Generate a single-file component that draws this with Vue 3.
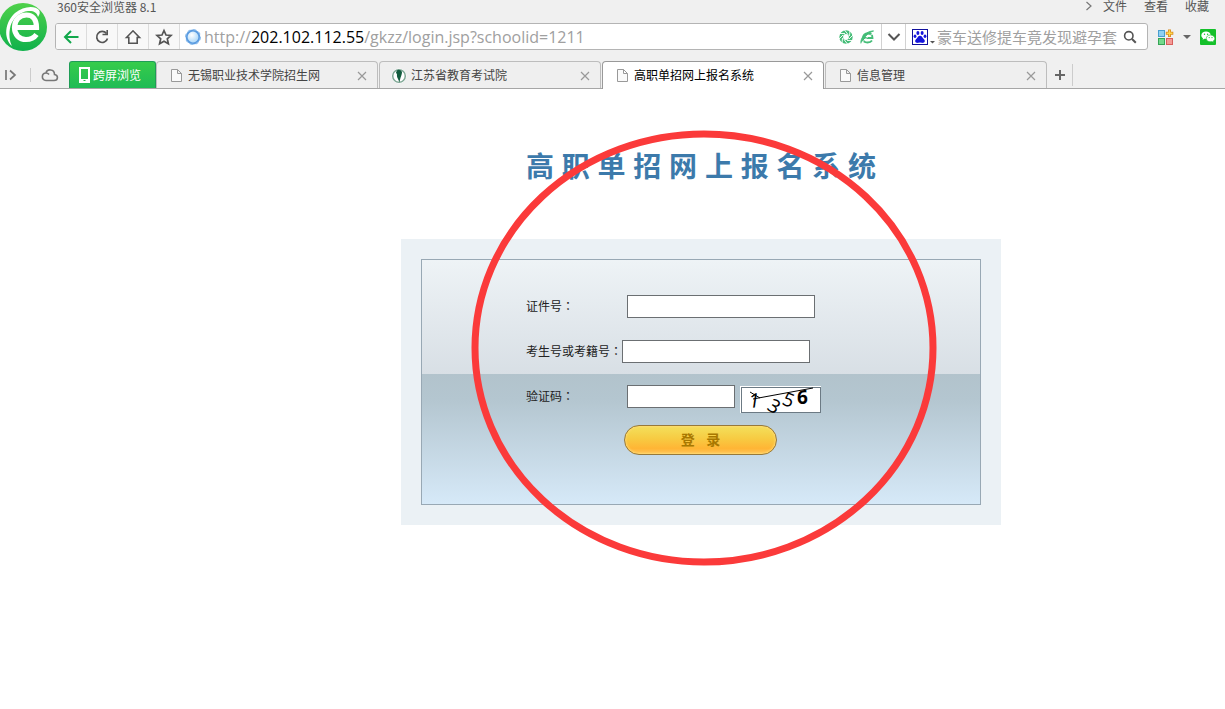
<script setup>
import { ref } from 'vue'

const menus = ['文件', '查看', '收藏']
const tabs = [
  { title: '无锡职业技术学院招生网', icon: 'page' },
  { title: '江苏省教育考试院', icon: 'leaf' },
  { title: '高职单招网上报名系统', icon: 'page' },
  { title: '信息管理', icon: 'page' },
]
const active = ref(2)

const url = ref('http://202.102.112.55/gkzz/login.jsp?schoolid=1211')
const editing = ref(false)
const keyword = ref('')

const idNumber = ref('')
const examNumber = ref('')
const captcha = ref('')
</script>

<template>
  <div class="window">
    <header class="chrome">
      <div class="top">
        <svg class="logo" viewBox="0 0 47 48" aria-hidden="true">
          <defs>
            <linearGradient id="lg" x1="0" y1="0" x2="0" y2="1">
              <stop offset="0" stop-color="#4fd14a" />
              <stop offset="1" stop-color="#10b14c" />
            </linearGradient>
          </defs>
          <circle cx="23" cy="24" r="24" fill="url(#lg)" />
          <path d="M15 24.500 H36.500 C36.500 16.500 32.500 12 26.500 12 C19.500 12 14.500 17 14.500 24.500 C14.500 32 19.500 36.500 26 36.500 C30.500 36.500 34 35 36.500 31.500" fill="none" stroke="#fff" stroke-width="5.200" />
          <path d="M12 43 C3 35 5 19 15 10 C23 3 35 2 39 7 C40.500 9 39.500 12 38 14 C37 9 33 7.500 28 8 C20 9 13 15 10.500 23 C8.500 31 9.500 38 12 43 Z" fill="#fff" />
        </svg>
        <div class="bars">
          <div class="titlebar">
            <span>360安全浏览器 8.1</span>
            <nav class="menus">
              <svg width="8" height="10" viewBox="0 0 8 10"><path d="M1.500 1 L6 5 L1.500 9" fill="none" stroke="#777" stroke-width="1.200" /></svg>
              <button v-for="m in menus" :key="m" type="button">{{ m }}</button>
            </nav>
          </div>
          <div class="toolrow">
            <div class="address">
              <button class="tool" type="button" aria-label="后退">
                <svg width="18" height="18" viewBox="0 0 18 18"><path d="M16.500 9 H3 M9 3 L3 9 L9 15" fill="none" stroke="#12a84c" stroke-width="2" /></svg>
              </button>
              <button class="tool" type="button" aria-label="刷新">
                <svg width="18" height="18" viewBox="0 0 18 18"><path d="M13.500 5.500 A5.500 5.500 0 1 0 14.500 10.500" fill="none" stroke="#555" stroke-width="1.700" /><path d="M14.200 2 V6.500 H9.500" fill="none" stroke="#555" stroke-width="1.600" /></svg>
              </button>
              <button class="tool" type="button" aria-label="主页">
                <svg width="18" height="18" viewBox="0 0 18 18"><path d="M2.500 9.500 L9 2.800 L15.500 9.500 H13.200 V15.200 H4.800 V9.500 Z" fill="none" stroke="#555" stroke-width="1.600" /></svg>
              </button>
              <button class="tool" type="button" aria-label="收藏本页">
                <svg width="18" height="18" viewBox="0 0 18 18"><path d="M9 2.500 L11 7 L16 7.500 L12.300 10.800 L13.400 15.700 L9 13.200 L4.600 15.700 L5.700 10.800 L2 7.500 L7 7 Z" fill="none" stroke="#555" stroke-width="1.700" /></svg>
              </button>
              <div class="url">
                <svg width="16" height="16" viewBox="0 0 16 16" aria-hidden="true">
                  <defs><radialGradient id="globe" cx=".4" cy=".35"><stop offset="0" stop-color="#fff" /><stop offset="1" stop-color="#b9defa" /></radialGradient></defs>
                  <circle cx="8" cy="8" r="6.400" fill="url(#globe)" stroke="#5a9be0" stroke-width="2" />
                  <circle cx="8" cy="8" r="7.400" fill="none" stroke="#8dbdec" stroke-width="1.200" stroke-dasharray="3 2.800" />
                </svg>
                <div class="field">
                  <input type="text" aria-label="网址" :value="editing ? url : ''" @focus="editing = true" @blur="editing = false" @change="url = $event.target.value">
                  <span v-if="!editing" class="shown">http://<b>202.102.112.55</b>/gkzz/login.jsp?schoolid=1211</span>
                </div>
                <svg width="14" height="14" viewBox="0 0 14 14" aria-hidden="true">
                  <circle cx="7" cy="7" r="4.800" fill="none" stroke="#45bd78" stroke-width="3.800" />
                  <path d="M5.500 0 L9 4.500 M11 .5 L10.500 6 M14 5 L10 9 M13 10.500 L8 10.500 M8.500 14 L5 9.500 M3 13.500 L3.500 8 M0 9 L4 5 M1 3.500 L6 3.500" stroke="#fff" stroke-width=".9" />
                </svg>
                <svg width="14" height="14" viewBox="0 0 14 14" aria-hidden="true">
                  <path d="M3 8 H12.500 C12.500 5 10.500 3.500 8 3.500 C4.800 3.500 3 5.500 3 8.500 C3 11.200 4.800 12.500 7.500 12.500 C9.500 12.500 11 12 12 10.500" fill="none" stroke="#45bd78" stroke-width="1.800" />
                  <path d="M1 13.500 C0 8 6 1 13.500 1 C11 1.500 4 6 1.500 12" fill="#45bd78" stroke="#45bd78" />
                  <path d="M1.500 13.800 C4 9.500 8 6 13 4" fill="none" stroke="#fff" stroke-width=".8" />
                </svg>
              </div>
              <button class="drop" type="button" aria-label="历史网址">
                <svg width="14" height="10" viewBox="0 0 14 10"><path d="M1.500 2 L7 7.500 L12.500 2" fill="none" stroke="#555" stroke-width="2" /></svg>
              </button>
              <div class="search">
                <button class="engine" type="button" aria-label="搜索引擎">
                  <svg width="24" height="16" viewBox="0 0 24 16">
                    <rect x=".5" y=".5" width="15" height="15" fill="#fff" stroke="#10109c" />
                    <g fill="#1414dc"><ellipse cx="5.900" cy="4" rx="1.500" ry="2" /><ellipse cx="10.100" cy="4" rx="1.500" ry="2" /><ellipse cx="3" cy="7.300" rx="1.400" ry="1.800" /><ellipse cx="13" cy="7.300" rx="1.400" ry="1.800" /><path d="M8 6.800 C10 6.800 10.500 9 12 10.300 C14 12.500 12 14.500 9.800 13.800 Q8 13.300 6.200 13.800 C4 14.500 2 12.500 4 10.300 C5.500 9 6 6.800 8 6.800 Z" /></g>
                    <path d="M18 12 H23 L20.500 14.500 Z" fill="#555" />
                  </svg>
                </button>
                <input v-model="keyword" type="text" aria-label="搜索" placeholder="豪车送修提车竟发现避孕套">
                <button type="button" aria-label="搜索">
                  <svg width="14" height="14" viewBox="0 0 14 14"><circle cx="5.800" cy="5.800" r="4.200" fill="none" stroke="#555" stroke-width="1.600" /><path d="M9 9 L12.800 12.800" stroke="#555" stroke-width="2" /></svg>
                </button>
              </div>
            </div>
            <div class="extras">
              <button class="apps" type="button" aria-label="扩展">
                <svg width="34" height="16" viewBox="0 0 34 16">
                  <rect x=".5" y="1.500" width="6" height="6" fill="#8fd0f2" stroke="#4a9ed0" />
                  <path d="M11.500 .5 V8 M7.800 4.200 H15.300" stroke="#d88a1c" stroke-width="3" /><path d="M11.500 1.300 V7.200 M8.600 4.200 H14.500" stroke="#ffd84c" stroke-width="1.400" />
                  <rect x=".5" y="9.500" width="6" height="6" fill="#74d98c" stroke="#36a456" />
                  <rect x="8.500" y="9.500" width="6" height="6" fill="#f49a96" stroke="#d85f5c" />
                  <path d="M25 6 H33 L29 10 Z" fill="#666" />
                </svg>
              </button>
              <button type="button" aria-label="微信">
                <svg width="16" height="16" viewBox="0 0 16 16">
                  <rect width="16" height="16" rx="1" fill="#14c02a" />
                  <path d="M6 2.500 C3.500 2.500 1.300 4 1.300 6.200 C1.300 7.500 2 8.500 3 9.200 L2.600 10.800 L4.500 9.800 C8 10.500 10.800 8.800 10.800 6.200 C10.800 4 8.500 2.500 6 2.500 Z" fill="#fff" />
                  <path d="M10.500 6 C8 6 6.300 7.500 6.300 9.500 C6.300 12 9 13.300 12 12.600 L13.600 13.500 L13.200 12.100 C14.300 11.400 14.800 10.500 14.800 9.500 C14.800 7.500 12.800 6 10.500 6 Z" fill="#fff" stroke="#14c02a" stroke-width=".6" />
                  <g fill="#14c02a"><circle cx="4.500" cy="5.200" r=".7" /><circle cx="7.600" cy="5.200" r=".7" /><circle cx="9.200" cy="8.600" r=".6" /><circle cx="12" cy="8.600" r=".6" /></g>
                </svg>
              </button>
            </div>
          </div>
        </div>
      </div>

      <div class="tabrow">
        <button class="side" type="button" aria-label="展开侧栏">
          <svg width="12" height="12" viewBox="0 0 12 12"><path d="M1 1 V11 M5 1.500 L10 6 L5 10.500" fill="none" stroke="#777" stroke-width="1.700" /></svg>
        </button>
        <button class="cloud" type="button" aria-label="云同步">
          <svg width="18" height="14" viewBox="0 0 18 14"><path d="M5 12.500 H13 C17.500 12.500 17.500 7 13.500 6.500 C13.500 0.800 6 .5 5 5 C.3 5 0 12.500 5 12.500 Z M5 5 Q7 5 8 6.500" fill="none" stroke="#777" stroke-width="1.600" /></svg>
        </button>
        <button class="cross" type="button">
          <svg width="11" height="16" viewBox="0 0 11 16"><rect x="1" y="1" width="9" height="14" fill="none" stroke="#fff" stroke-width="2" /><path d="M1 13 H10" stroke="#fff" stroke-width="2" /><path d="M4.500 13.500 H6.500" stroke="#25b84a" /></svg>
          <span>跨屏浏览</span>
        </button>
        <div class="tabs" role="tablist">
          <div v-for="(t, i) in tabs" :key="t.title" class="tab" :class="{ on: i === active }">
            <button class="name" type="button" role="tab" :aria-selected="i === active" @click="active = i">
              <svg v-if="t.icon === 'page'" width="16" height="14" viewBox="0 0 16 14"><path d="M3.500 .5 H9.500 L13.500 4.500 V12.500 H3.500 Z M9.500 .5 V4.500 H13.500" fill="#fafafa" stroke="#999" /></svg>
              <svg v-else width="16" height="16" viewBox="0 0 16 16"><circle cx="8" cy="8" r="7.500" fill="#fff" /><circle cx="8" cy="8" r="6.300" fill="none" stroke="#7fa795" stroke-width="1.500" /><path d="M6 2.500 C7 1 10 2 11 4 C11 7 9.500 8.500 8.500 14.500 C7.500 11 5.500 9.500 6 6.500 L5 4.500 Z" fill="#135c3f" /></svg>
              <span>{{ t.title }}</span>
            </button>
            <button class="close" type="button" :aria-label="'关闭 ' + t.title">
              <svg width="10" height="10" viewBox="0 0 10 10"><path d="M1 1 L9 9 M9 1 L1 9" stroke="#999" stroke-width="1.200" /></svg>
            </button>
          </div>
        </div>
        <button class="plus" type="button" aria-label="新建标签页">
          <svg width="12" height="12" viewBox="0 0 12 12"><path d="M6 1 V11 M1 6 H11" stroke="#666" stroke-width="2" /></svg>
        </button>
      </div>
    </header>

    <main class="page">
      <div class="login">
        <h1>高 职 单 招 网 上 报 名 系 统</h1>
        <div class="frame">
          <form class="card" @submit.prevent>
            <div class="row">
              <label for="idno">证件号<i>：</i></label>
              <input id="idno" v-model="idNumber" type="text">
            </div>
            <div class="row">
              <label class="tight" for="exam">考生号或考籍号<i>：</i></label>
              <input id="exam" v-model="examNumber" type="text">
            </div>
            <div class="row">
              <label for="code">验证码<i>：</i></label>
              <input id="code" v-model="captcha" class="short" type="text">
              <svg class="captcha" width="81" height="27" viewBox="0 0 81 27" role="img" aria-label="验证码图片">
                <rect width="81" height="27" fill="#fff" />
                <rect x="1.500" y="1.500" width="79" height="25" fill="#fff" stroke="#6c7a84" />
                <path d="M10 6 L20 12 M13 13 L73 2" stroke="#000" fill="none" />
                <text transform="translate(9 22) rotate(-4)" class="c1">1</text>
                <text transform="translate(26 23) rotate(32)" class="c2">3</text>
                <text transform="translate(41 18) rotate(22)" class="c3">5</text>
                <text x="57" y="18" class="c4">6</text>
              </svg>
            </div>
            <button class="submit" type="submit">登&nbsp;&nbsp;&nbsp;录</button>
          </form>
        </div>
        <svg class="ring" viewBox="0 0 466 436" aria-hidden="true">
          <ellipse cx="233" cy="218" rx="229" ry="214" fill="none" stroke="#fb3a3a" stroke-width="7" />
        </svg>
      </div>
    </main>
  </div>
</template>

<style>
html, body { background: #fff; overflow-x: hidden; }
</style>

<style scoped>
.window {
  font-family: "Noto Sans CJK SC", sans-serif;
  font-size: 12px;
  color: #333;
}
* { box-sizing: border-box; }
svg { display: block; flex: none; }
button {
  display: flex;
  align-items: center;
  justify-content: center;
  margin: 0;
  padding: 0;
  border: 0;
  background: none;
  font: inherit;
  color: inherit;
}
input {
  min-width: 0;
  padding: 0 2px;
  border: 0;
  outline: 0;
  background: none;
  font: inherit;
}

.chrome {
  background: #f0f0f0;
  border-bottom: 1px solid #a6a6a6;
}
.top { display: flex; gap: 8px; }
.logo { width: 47px; height: 48px; margin-top: 3px; }
.bars { flex: 1; min-width: 0; }
.titlebar {
  display: flex;
  justify-content: space-between;
  height: 23px;
  padding: 0 16px 0 2px;
  line-height: 14px;
  color: #555;
}
.menus { display: flex; gap: 17px; height: 12px; align-items: center; line-height: 12px; }
.menus svg { margin-right: -7px; }
.toolrow { display: flex; align-items: center; }
.address {
  flex: 1;
  display: flex;
  min-width: 0;
  height: 27px;
  border: 1px solid #b4b4b4;
  border-radius: 3px;
  background: #fff;
  overflow: hidden;
}
.tool {
  width: 31px;
  background: #f8f8f8;
  border-right: 1px solid #dcdcdc;
}
.url {
  flex: 1;
  display: flex;
  align-items: center;
  gap: 7px;
  min-width: 0;
  padding: 0 7px 0 5px;
}
.field {
  flex: 1;
  display: grid;
  min-width: 0;
  margin-left: -4px;
  font-family: "Open Sans", "Noto Sans CJK SC", sans-serif;
  font-size: 16px;
  line-height: 24px;
}
.field > * { grid-area: 1 / 1; padding: 0; }
.shown { overflow: hidden; white-space: nowrap; color: #a0a0a0; pointer-events: none; }
.shown b { font-weight: 400; color: #000; }
.drop {
  width: 25px;
  border: solid #d2d2d2;
  border-width: 0 1px;
}
.search {
  display: flex;
  align-items: center;
  width: 241px;
  padding: 0 10px 0 6px;
}
.search input { flex: 1; padding: 0 0 0 1px; font-size: 15px; }
.search input::placeholder { color: #a0a0a0; opacity: 1; }
.extras { display: flex; align-items: center; gap: 8px; padding: 0 9px 0 10px; }

.tabrow {
  display: flex;
  align-items: center;
  height: 27px;
  margin-top: 10px;
}
.side { width: 31px; padding-right: 8px; height: 14px; border-right: 1px solid #ccc; }
.cloud { width: 38px; }
.cross {
  justify-content: flex-start;
  gap: 3px;
  width: 87px;
  height: 27px;
  padding-left: 9px;
  border: 1px solid #1f9d56;
  border-bottom: 0;
  border-radius: 3px 3px 0 0;
  background: linear-gradient(#36cc4b, #1fbb55);
  color: #fff;
}
.cross span, .name span { padding-bottom: 2px; }
.tabs { display: flex; gap: 1px; min-width: 0; }
.tab {
  display: flex;
  flex: 0 1 222px;
  width: 222px;
  min-width: 0;
  height: 27px;
  border: 1px solid #bdbdbd;
  border-bottom: 0;
  border-radius: 4px 4px 0 0;
  background: #efefef;
  color: #444;
}
.tab.on {
  height: 28px;
  margin-bottom: -1px;
  border-color: #999;
  background: #fff;
  color: #000;
}
.name {
  flex: 1;
  justify-content: flex-start;
  gap: 4px;
  min-width: 0;
  height: 27px;
  padding-left: 11px;
}
.name span { overflow: hidden; white-space: nowrap; }
.close { height: 27px; padding: 0 10px 0 6px; }
.plus { width: 26px; height: 22px; border-right: 1px solid #ccc; }

.page { padding: 55px 0 150px 177px; }
.login {
  position: relative;
  width: 600px;
  max-width: 100%;
  margin: 0 auto;
}
h1 {
  margin: 0 0 47px;
  font-family: "Liberation Sans", "Noto Sans CJK SC", sans-serif;
  font-size: 28px;
  line-height: 48px;
  font-weight: 700;
  text-align: center;
  white-space: nowrap;
  color: #3c7aab;
}
.frame { padding: 20px; background: #ebf1f5; }
.card {
  padding: 24px 20px 49px 104px;
  border: 1px solid #98a8b4;
  background:
    linear-gradient(#eef3f6, #d8dfe5) top / 100% 114px no-repeat,
    linear-gradient(#b2c3cc 114px, #b4c6d0 140px, #d6e9f8);
}
.row { display: flex; align-items: center; height: 45px; }
label { width: 101px; padding-bottom: 2px; color: #222; white-space: nowrap; }
label.tight { width: auto; }
label i { font-family: "Noto Sans CJK JP", sans-serif; font-style: normal; }
.row input {
  width: 188px;
  height: 23px;
  border: 1px solid #6b6f72;
  background: #fff;
}
.row input.short { width: 108px; }
.captcha { margin: 6px 0 0 5px; }
.captcha text { font-family: "Open Sans", sans-serif; font-size: 19px; }
.captcha .c1 { font-size: 20px; font-style: italic; }
.captcha .c4 { font-family: "Noto Sans", sans-serif; font-size: 19px; font-weight: 700; }
.submit {
  width: 153px;
  height: 30px;
  margin: 6px 0 0 98px;
  padding-bottom: 2px;
  border: 1px solid #97793a;
  border-radius: 15px;
  background: linear-gradient(#f3e05c, #f7cb42 45%, #ffb535 80%, #ffc357);
  box-shadow: inset 0 0 2px 1px #ffd970;
  color: #a87800;
  font-family: "Liberation Sans", "Noto Sans CJK SC", sans-serif;
  font-size: 14px;
  font-weight: 700;
}
.ring {
  position: absolute;
  left: 70px;
  top: -14px;
  width: 466px;
  height: 436px;
  pointer-events: none;
}
</style>
